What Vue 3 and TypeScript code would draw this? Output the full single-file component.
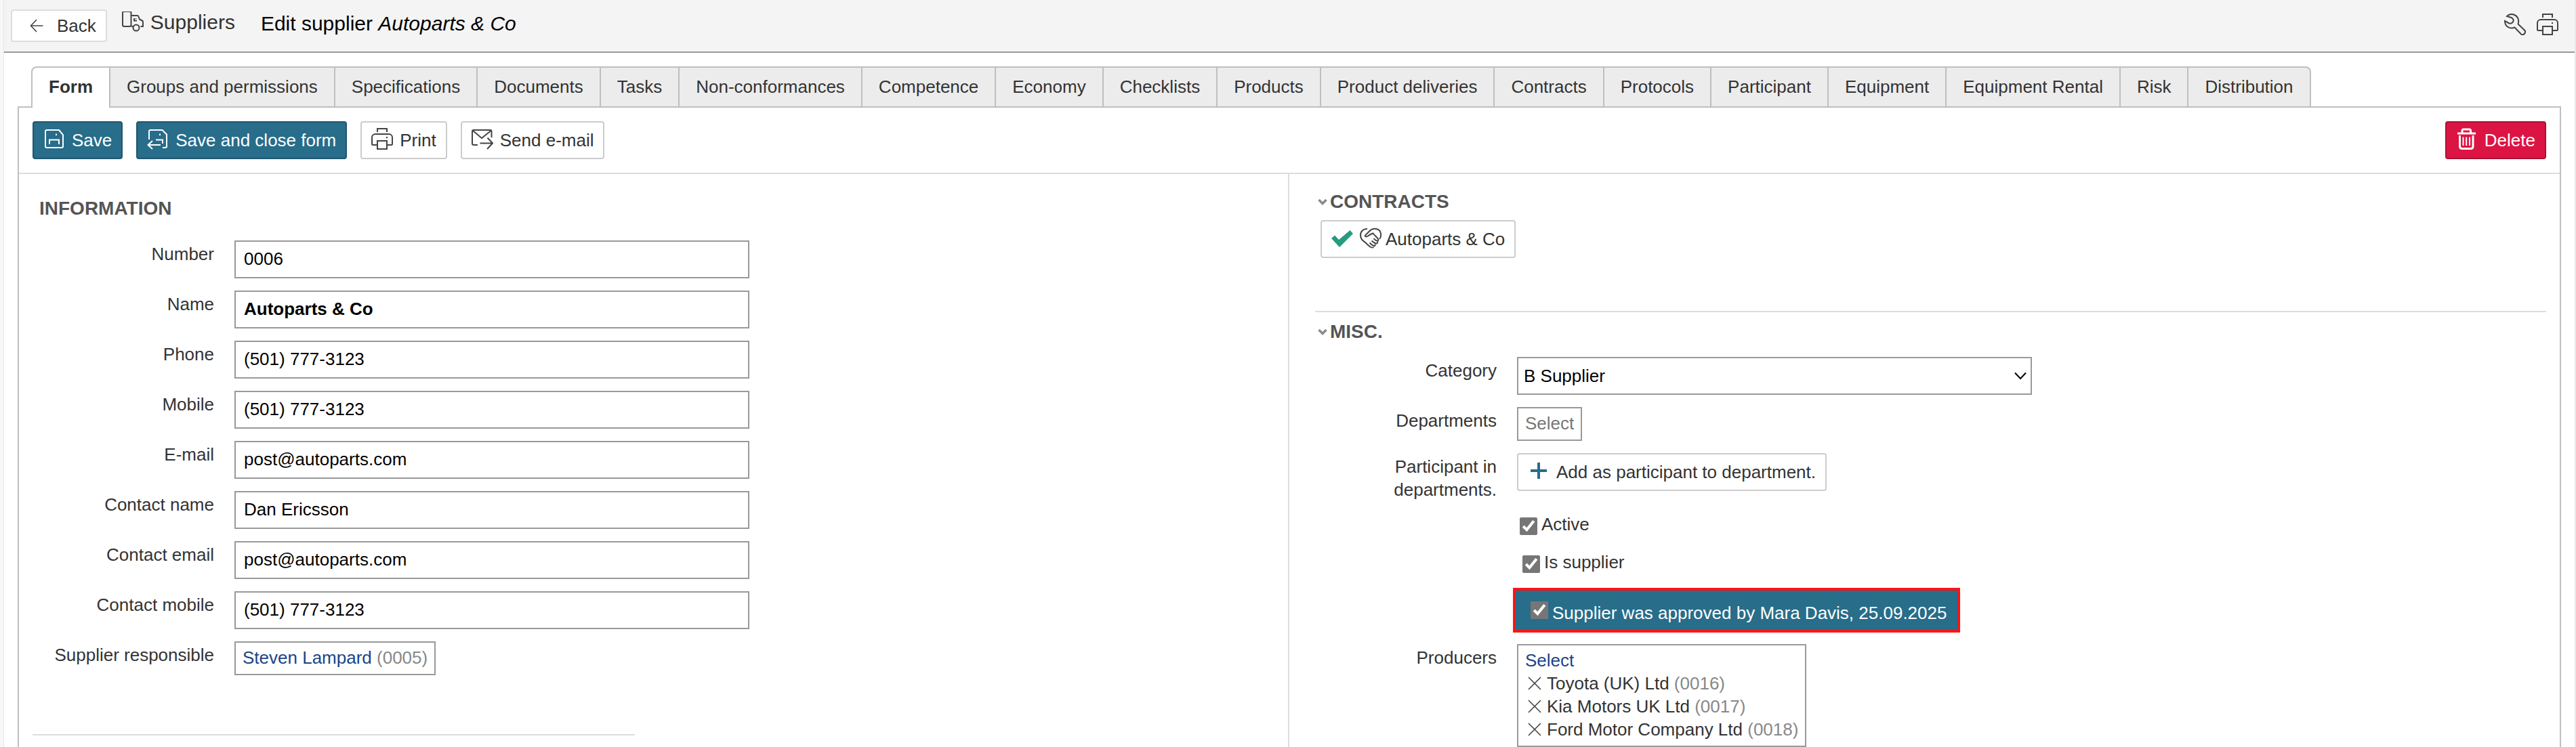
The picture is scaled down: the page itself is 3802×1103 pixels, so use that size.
<script setup lang="ts">
import { ref } from 'vue'

interface Field {
  id: string
  label: string
  value: string
  bold?: boolean
}

interface Producer {
  name: string
  code: string
}

const tabs: string[] = [
  'Form', 'Groups and permissions', 'Specifications', 'Documents', 'Tasks',
  'Non-conformances', 'Competence', 'Economy', 'Checklists', 'Products',
  'Product deliveries', 'Contracts', 'Protocols', 'Participant', 'Equipment',
  'Equipment Rental', 'Risk', 'Distribution',
]
const activeTab = ref('Form')

const fields = ref<Field[]>([
  { id: 'number', label: 'Number', value: '0006' },
  { id: 'name', label: 'Name', value: 'Autoparts & Co', bold: true },
  { id: 'phone', label: 'Phone', value: '(501) 777-3123' },
  { id: 'mobile', label: 'Mobile', value: '(501) 777-3123' },
  { id: 'email', label: 'E-mail', value: 'post@autoparts.com' },
  { id: 'contact-name', label: 'Contact name', value: 'Dan Ericsson' },
  { id: 'contact-email', label: 'Contact email', value: 'post@autoparts.com' },
  { id: 'contact-mobile', label: 'Contact mobile', value: '(501) 777-3123' },
])

const category = ref('B Supplier')
const categories: string[] = ['A Supplier', 'B Supplier', 'C Supplier']
const isActive = ref(true)
const isSupplier = ref(true)
const isApproved = ref(true)

const producers = ref<Producer[]>([
  { name: 'Toyota (UK) Ltd', code: '0016' },
  { name: 'Kia Motors UK Ltd', code: '0017' },
  { name: 'Ford Motor Company Ltd', code: '0018' },
])

function removeProducer(code: string): void {
  producers.value = producers.value.filter((p) => p.code !== code)
}
</script>

<template>
  <div class="page">
    <header class="topbar">
      <button type="button" class="back">
        <svg class="thin" width="20" height="20" viewBox="0 0 20 20">
          <path d="M19.500 10H1.500M10 1L1.500 10L10 19" />
        </svg>
        Back
      </button>
      <a href="#suppliers" class="module">
        <svg width="32" height="32" viewBox="0 1 32 32">
          <path d="M3 1H11.500A2 2 0 0 1 13.500 3V21A2 2 0 0 1 11.500 23H3A2 2 0 0 1 1 21V3A2 2 0 0 1 3 1Z" />
          <path d="M14 7H22.500Q24 7 24.500 8.500L26 12.500L30 14.500Q31 15 31 16.500V23H27.500" />
          <path d="M18 11V14.500H22M20.500 11V12M14 23H16" />
          <circle cx="21" cy="25" r="4.500" />
        </svg>
        <span>Suppliers</span>
      </a>
      <h1 class="title">Edit supplier <em>Autoparts &amp; Co</em></h1>
      <div class="tools">
        <button type="button" class="tool" aria-label="Settings">
          <svg width="32" height="32" viewBox="0 0 32 32">
            <path d="M1 11L7.500 14.500Q10 15.500 12.500 13Q15 10 12.500 7.500L10.500 6L4 4C7 1 11 .5 14 1.500C20 3.500 22.500 9 20.500 15.500L30 24.500C33 28 28.500 33 25 30.500L15.500 20.500C9 23 1 20 1 11Z" />
          </svg>
        </button>
        <button type="button" class="tool" aria-label="Print page">
          <svg width="32" height="32" viewBox="0 0 32 32">
            <path d="M9 6V1H23V6M8 25H2.500Q1 25 1 23.500V14A5 5 0 0 1 6 9H26A5 5 0 0 1 31 14V23.500Q31 25 29.500 25H24M9 19H23V31H9Z" />
            <circle class="dot" cx="23" cy="14" r="1.200" />
          </svg>
        </button>
      </div>
    </header>

    <main class="content">
      <nav class="tabs">
        <button
          v-for="tab in tabs"
          :key="tab"
          type="button"
          class="tab"
          :class="{ active: tab === activeTab }"
          @click="activeTab = tab"
        >{{ tab }}</button>
      </nav>

      <section class="panel">
        <div class="toolbar">
          <button type="button" class="btn primary">
            <svg width="32" height="32" viewBox="0 0 32 32">
              <path d="M23 3H5Q3 3 3 5V27Q3 29 5 29H27Q29 29 29 27V10ZM9 24V17.500H23V24M19 8.500V11" />
            </svg>
            Save
          </button>
          <button type="button" class="btn primary">
            <svg width="32" height="32" viewBox="0 0 32 32">
              <path d="M3 17V5Q3 3 5 3H22.500L29 9.500V27Q29 29 27 29H23M13 17.500H23V23M19 8.500V11M20 25H1.500M8 19L1.500 25L8 31" />
            </svg>
            Save and close form
          </button>
          <button type="button" class="btn">
            <svg width="32" height="32" viewBox="0 0 32 32">
              <path d="M9 6V1H23V6M8 25H2.500Q1 25 1 23.500V14A5 5 0 0 1 6 9H26A5 5 0 0 1 31 14V23.500Q31 25 29.500 25H24M9 19H23V31H9Z" />
              <circle class="dot" cx="23" cy="14" r="1.200" />
            </svg>
            Print
          </button>
          <button type="button" class="btn">
            <svg width="32" height="32" viewBox="0 0 32 32">
              <path d="M9 25H3Q1 25 1 23V5Q1 3 3 3H27.500Q29.500 3 29.500 5V14M2 4L15 15L28.500 4M12.500 22.500H31M23.500 14.500L31 22.500L23 31" />
            </svg>
            Send e-mail
          </button>
          <button type="button" class="btn danger">
            <svg width="32" height="32" viewBox="0 0 32 32">
              <path class="bold" d="M2 8H29M9 7V4Q9 2 11 2H19.500Q21.500 2 21.500 4V7M5.500 11V27Q5.500 30.500 9 30.500H21.500Q25 30.500 25 27V11" />
              <path d="M10.500 13.500V26M15.200 13.500V26M20 13.500V26" />
            </svg>
            Delete
          </button>
        </div>

        <div class="columns">
          <section class="col left">
            <h2 class="heading plain">INFORMATION</h2>
            <div class="rows">
              <div v-for="field in fields" :key="field.id" class="row">
                <label class="label" :for="field.id">{{ field.label }}</label>
                <input :id="field.id" v-model="field.value" type="text" class="input" :class="{ bold: field.bold }">
              </div>
              <div class="row">
                <span class="label">Supplier responsible</span>
                <div class="picker"><a href="#person">Steven Lampard</a> <span class="code">(0005)</span></div>
              </div>
            </div>
            <hr class="rule short">
          </section>

          <section class="col right">
            <h2 class="heading">
              <svg width="14" height="10" viewBox="0 0 14 10"><path d="M1.500 2L7 7.500L12.500 2" /></svg>
              CONTRACTS
            </h2>
            <button type="button" class="btn contract">
              <svg class="check" width="32" height="32" viewBox="0 0 32 32">
                <path d="M0 17L5 12.500L11 19L27.500 5L32 10L12 30Z" />
              </svg>
              <span class="contract-name">
                <svg width="32" height="32" viewBox="0 0 32 32">
                  <path d="M11 3C5 2.500 1 7 1 12C1 18 4 20 8 23L14 28.500C16 30.500 19 31 20.500 30" />
                  <path d="M29 18C33 13 31 5 26 3.500C22 2 17 3 13.500 7L8 12.500C7 14.500 9.500 15 12 13.500Q15 11 19.500 9.500C22 13 26 16 27 18C28.500 21.500 24.500 22 20.500 17M26 22C27 26 22 25 17.500 20.500M22.500 25.500C23 29.500 20 29 14.500 23.500" />
                </svg>
                Autoparts &amp; Co
              </span>
            </button>
            <hr class="rule">

            <h2 class="heading">
              <svg width="14" height="10" viewBox="0 0 14 10"><path d="M1.500 2L7 7.500L12.500 2" /></svg>
              MISC.
            </h2>
            <div class="rows">
              <div class="row">
                <label class="label" for="category">Category</label>
                <div class="select-wrap">
                  <select id="category" v-model="category" class="select">
                    <option v-for="c in categories" :key="c">{{ c }}</option>
                  </select>
                  <svg class="caret" width="18" height="12" viewBox="0 0 18 12"><path d="M1 1.500L9 10L17 1.500" /></svg>
                </div>
              </div>
              <div class="row">
                <span class="label">Departments</span>
                <button type="button" class="picker muted">Select</button>
              </div>
              <div class="row">
                <span class="label">Participant in departments.</span>
                <button type="button" class="btn">
                  <svg class="plus" width="32" height="32" viewBox="0 0 32 32"><path d="M16 4V28M4 16H28" /></svg>
                  Add as participant to department.
                </button>
              </div>
              <div class="row">
                <span class="label" />
                <label class="tick"><input v-model="isActive" type="checkbox">Active</label>
              </div>
              <div class="row">
                <span class="label" />
                <label class="tick nested"><input v-model="isSupplier" type="checkbox">Is supplier</label>
              </div>
              <div class="row approval">
                <span class="label" />
                <label class="approved"><input v-model="isApproved" type="checkbox">Supplier was approved by Mara Davis, 25.09.2025</label>
              </div>
              <div class="row">
                <span class="label">Producers</span>
                <div class="picker">
                  <a href="#select-producers">Select</a>
                  <ul class="producers">
                    <li v-for="p in producers" :key="p.code">
                      <button type="button" class="remove" :aria-label="'Remove ' + p.name" @click="removeProducer(p.code)">
                        <svg class="thin" width="20" height="20" viewBox="0 0 20 20"><path d="M1 1L19 19M19 1L1 19" /></svg>
                      </button>
                      <span>{{ p.name }} <span class="code">({{ p.code }})</span></span>
                    </li>
                  </ul>
                </div>
              </div>
            </div>
          </section>
        </div>
      </section>
    </main>
  </div>
</template>

<style>
body {
  margin: 0;
  background: #fff;
}
</style>

<style scoped>
.page {
  box-sizing: border-box;
  display: flex;
  flex-direction: column;
  min-height: 100vh;
  margin-left: 5px;
  border-left: 1px solid #e4e4e4;
  border-right: 2px solid #e8e8e8;
  box-shadow: -5px 0 0 #f7f7f7;
  background: #fff;
  color: #333;
  font-family: "Liberation Sans", Arial, sans-serif;
  font-size: 26px;
  line-height: 34px;
}

button,
input,
select {
  box-sizing: border-box;
  margin: 0;
  font: inherit;
  color: inherit;
}

button {
  cursor: pointer;
}

svg {
  flex: none;
  fill: none;
  stroke: #444;
  stroke-width: 2;
}

.thin {
  stroke-width: 1.6;
}

.dot {
  fill: #444;
  stroke: none;
}

/* Top bar */
.topbar {
  display: flex;
  align-items: flex-start;
  padding: 14px 24px 14px 10px;
  border-bottom: 2px solid #999;
  background: #f4f4f4;
}

.back {
  display: flex;
  align-items: center;
  gap: 20px;
  height: 48px;
  padding: 0 14px 0 26px;
  border: 2px solid #ddd;
  border-radius: 4px;
  background: #fff;
}

.module {
  display: flex;
  align-items: center;
  gap: 10px;
  margin-left: 22px;
  color: #333;
  font-size: 30px;
  line-height: 38px;
  text-decoration: none;
}

.title {
  margin: 0 0 0 38px;
  color: #000;
  font-size: 30px;
  font-weight: 400;
  line-height: 42px;
}

.tools {
  display: flex;
  align-items: center;
  gap: 16px;
  height: 44px;
  margin-left: auto;
}

.tool,
.remove {
  display: flex;
  padding: 0;
  border: 0;
  background: none;
}

/* Tabs */
.content {
  flex: 1;
  display: flex;
  flex-direction: column;
  padding: 20px 20px 0;
}

.tabs {
  display: flex;
  padding-left: 20px;
}

.tab {
  padding: 0 24px;
  border: 0 solid #bfbfbf;
  border-width: 2px 2px 0 0;
  background: #ececec;
  line-height: 57px;
  white-space: nowrap;
}

.tab:first-child {
  border-left-width: 2px;
  border-top-left-radius: 8px;
}

.tab:last-child {
  border-top-right-radius: 8px;
}

.tab.active {
  position: relative;
  margin-bottom: -2px;
  padding-bottom: 2px;
  background: #fff;
  font-weight: 700;
}

/* Panel */
.panel {
  flex: 1;
  display: flex;
  flex-direction: column;
  border: 2px solid #bfbfbf;
  border-bottom: 0;
}

.toolbar {
  display: flex;
  gap: 20px;
  padding: 20px;
  border-bottom: 2px solid #ddd;
}

.btn {
  display: flex;
  align-items: center;
  gap: 10px;
  height: 56px;
  padding: 0 14px;
  border: 2px solid #ccc;
  border-radius: 4px;
  background: #fff;
  white-space: nowrap;
}

.btn svg {
  margin-bottom: 4px;
}

.btn.primary {
  border-color: #1f566d;
  background: #286d8a;
  color: #fff;
}

.btn.danger {
  margin-left: auto;
  border-color: #ad1035;
  background: #dc1443;
  color: #fff;
}

.btn.primary svg,
.btn.danger svg {
  stroke: #fff;
}

.btn.danger .bold {
  stroke-width: 3;
}

/* Two columns */
.columns {
  flex: 1;
  display: grid;
  grid-template-columns: 1fr 1fr;
}

.col {
  box-sizing: border-box;
}

.left {
  padding: 34px 0 17px 20px;
  border-right: 2px solid #ddd;
}

.right {
  padding: 24px 20px 0 38px;
}

.heading {
  display: flex;
  align-items: center;
  gap: 4px;
  margin: 0 0 20px;
  padding-left: 4px;
  color: #555;
  font-size: 28px;
  font-weight: 700;
  line-height: 34px;
}

.heading svg {
  stroke: #8a8a8a;
  stroke-width: 3.5;
}

.heading.plain {
  margin-bottom: 30px;
  padding-left: 10px;
}

.rule {
  height: 2px;
  margin: 78px 0 12px;
  border: 0;
  background: #ddd;
}

.rule.short {
  width: 48%;
  margin: 87px 0 0;
}

.contract {
  margin: -10px 0 0 8px;
}

.contract-name {
  display: flex;
  align-items: center;
  gap: 6px;
}

.check path {
  fill: #259b80;
  stroke: none;
}

.rows {
  display: flex;
  flex-direction: column;
  gap: 18px;
}

.row {
  display: flex;
  align-items: flex-start;
  gap: 30px;
}

.label {
  flex: none;
  width: 268px;
  padding-top: 3px;
  text-align: right;
}

.input,
.select {
  width: 760px;
  height: 56px;
  border: 2px solid #999;
  border-radius: 0;
  background: #fff;
  color: #000;
}

.input {
  padding: 0 12px 2px;
}

.input.bold {
  font-weight: 700;
}

.select-wrap {
  position: relative;
}

.select {
  display: block;
  padding: 0 40px 0 8px;
  appearance: none;
}

.caret {
  position: absolute;
  top: 22px;
  right: 8px;
  stroke: #000;
  pointer-events: none;
}

.picker {
  padding: 5px 10px 7px;
  border: 2px solid #999;
  background: #fff;
  line-height: 34px;
}

.picker a {
  color: #1b4488;
  text-decoration: none;
}

.muted {
  color: #777;
}

.code {
  color: #888;
}

.plus {
  stroke: #286d8a;
  stroke-width: 4;
}

/* Tick boxes */
input[type="checkbox"] {
  flex: none;
  width: 26px;
  height: 26px;
  accent-color: #767676;
}

.tick {
  display: flex;
  align-items: flex-start;
  gap: 6px;
  padding: 0 4px 6px;
  line-height: 32px;
}

.tick input {
  align-self: center;
  margin-top: 6px;
}

.tick.nested {
  padding-left: 8px;
}

.approval {
  gap: 28px;
  padding: 2px 0 3px;
}

.approved {
  display: flex;
  align-items: flex-start;
  gap: 6px;
  padding: 16px 16px 8px 22px;
  outline: 4px solid #ff1414;
  background: #286d8a;
  color: #fff;
}

.producers {
  margin: 0;
  padding: 0;
  list-style: none;
}

.producers li {
  display: flex;
  align-items: center;
  gap: 4px;
}

.remove {
  justify-content: center;
  width: 28px;
}
</style>
